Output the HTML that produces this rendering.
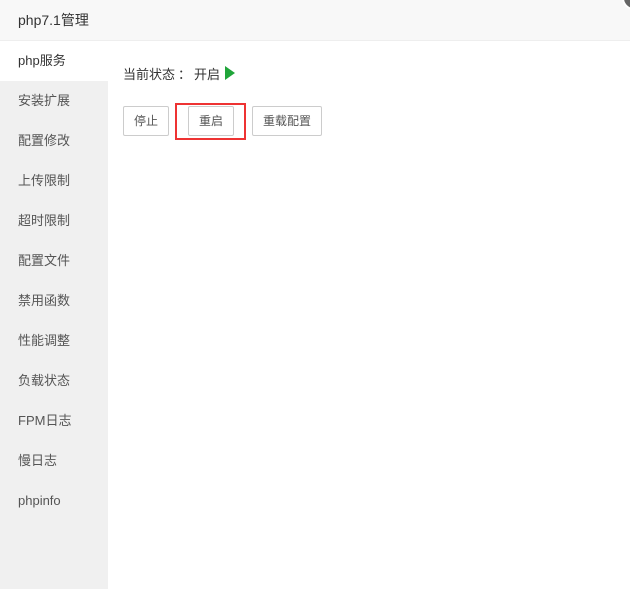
<!DOCTYPE html>
<html><head><meta charset="utf-8"><style>
*{margin:0;padding:0;box-sizing:border-box}
body{width:630px;height:589px;overflow:hidden;background:#fff;font-family:"Liberation Sans","Noto Sans CJK SC",sans-serif;position:relative;color:#333}
.hd{position:absolute;left:0;top:0;width:630px;height:41px;background:#f8f8f8;border-bottom:1px solid #eee;font-size:14px;line-height:41px;padding-left:18px;color:#333}
.dot{position:absolute;left:622px;top:-14px;width:24px;height:24px;border-radius:50%;background:#666;border:2px solid #fff}
.sb{position:absolute;left:0;top:41px;width:108px;height:548px;background:#f0f0f0}
.sb div{height:40px;line-height:40px;padding-left:18px;font-size:13px;color:#555}
.sb .on{background:#fff;color:#333}
.st{position:absolute;left:123px;top:66px;font-size:13px;line-height:18px;color:#333}
.tri{display:inline-block;width:0;height:0;border-left:10px solid #20a53a;border-top:7px solid transparent;border-bottom:7px solid transparent;vertical-align:-1px;margin-left:5px}
.b{position:absolute;top:106px;height:30px;border:1px solid #ccc;border-radius:2px;background:#fff;font-size:12px;line-height:28px;text-align:center;color:#555}
.red{position:absolute;left:175px;top:103px;width:71px;height:37px;border:2px solid #e33}
</style></head><body>
<div class="hd">php7.1管理</div>
<div class="dot"></div>
<div class="sb">
<div class="on">php服务</div><div>安装扩展</div><div>配置修改</div><div>上传限制</div><div>超时限制</div><div>配置文件</div><div>禁用函数</div><div>性能调整</div><div>负载状态</div><div>FPM日志</div><div>慢日志</div><div>phpinfo</div>
</div>
<div class="st">当前状态<span style="display:inline-block;width:19px;text-align:center">：</span>开启<span class="tri"></span></div>
<div class="b" style="left:123px;width:46px">停止</div>
<div class="red"></div>
<div class="b" style="left:188px;width:46px">重启</div>
<div class="b" style="left:252px;width:70px">重载配置</div>
</body></html>
